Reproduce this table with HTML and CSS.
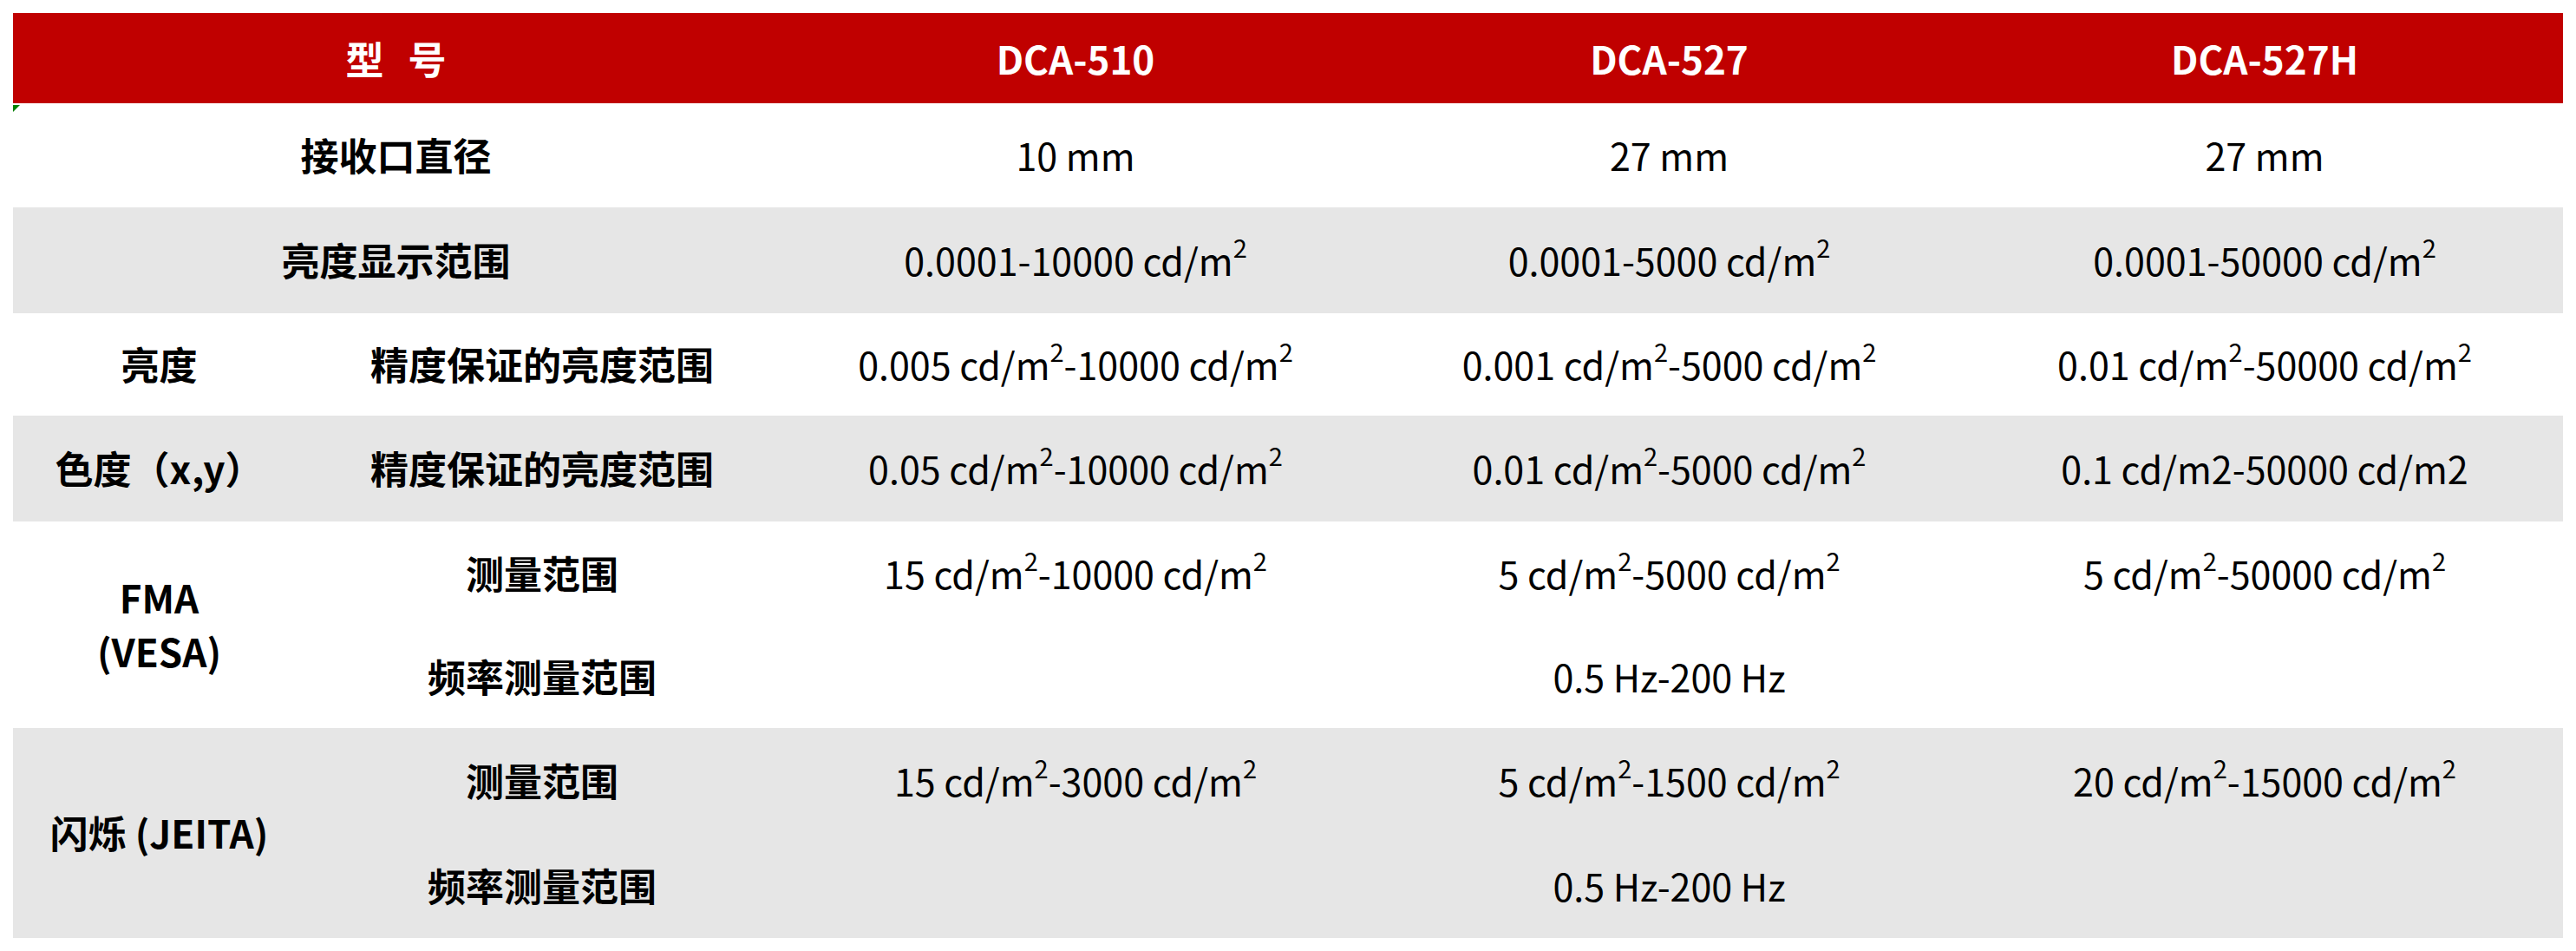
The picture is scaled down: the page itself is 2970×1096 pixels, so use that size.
FILE: index.html
```html
<!DOCTYPE html>
<html lang="zh-CN">
<head>
<meta charset="utf-8">
<title>DCA 规格</title>
<link rel="stylesheet" href="styles.css">
</head>
<body>
<div class="sheet">
  <span class="err-mark"></span>
  <table class="spec">
    <colgroup>
      <col class="c1"><col class="c2"><col class="c3"><col class="c4"><col class="c5">
    </colgroup>
    <thead>
      <tr class="r-head">
        <th colspan="2"><span class="spaced">型 号</span></th>
        <th>DCA-510</th>
        <th>DCA-527</th>
        <th>DCA-527H</th>
      </tr>
    </thead>
    <tbody>
      <tr class="r-1 white">
        <td class="lbl" colspan="2">接收口直径</td>
        <td>10 mm</td>
        <td>27 mm</td>
        <td>27 mm</td>
      </tr>
      <tr class="r-2 gray">
        <td class="lbl" colspan="2">亮度显示范围</td>
        <td>0.0001-10000 cd/m<sup class="sq">2</sup></td>
        <td>0.0001-5000 cd/m<sup class="sq">2</sup></td>
        <td>0.0001-50000 cd/m<sup class="sq">2</sup></td>
      </tr>
      <tr class="r-3 white">
        <td class="lbl">亮度</td>
        <td class="lbl">精度保证的亮度范围</td>
        <td>0.005 cd/m<sup class="sq">2</sup>-10000 cd/m<sup class="sq">2</sup></td>
        <td>0.001 cd/m<sup class="sq">2</sup>-5000 cd/m<sup class="sq">2</sup></td>
        <td>0.01 cd/m<sup class="sq">2</sup>-50000 cd/m<sup class="sq">2</sup></td>
      </tr>
      <tr class="r-4 gray">
        <td class="lbl">色度（x,y）</td>
        <td class="lbl">精度保证的亮度范围</td>
        <td>0.05 cd/m<sup class="sq">2</sup>-10000 cd/m<sup class="sq">2</sup></td>
        <td>0.01 cd/m<sup class="sq">2</sup>-5000 cd/m<sup class="sq">2</sup></td>
        <td>0.1 cd/m2-50000 cd/m2</td>
      </tr>
      <tr class="r-5a white">
        <td class="lbl" rowspan="2">FMA<br>(VESA)</td>
        <td class="lbl">测量范围</td>
        <td>15 cd/m<sup class="sq">2</sup>-10000 cd/m<sup class="sq">2</sup></td>
        <td>5 cd/m<sup class="sq">2</sup>-5000 cd/m<sup class="sq">2</sup></td>
        <td>5 cd/m<sup class="sq">2</sup>-50000 cd/m<sup class="sq">2</sup></td>
      </tr>
      <tr class="r-5b white">
        <td class="lbl">频率测量范围</td>
        <td></td>
        <td>0.5 Hz-200 Hz</td>
        <td></td>
      </tr>
      <tr class="r-6a gray">
        <td class="lbl" rowspan="2">闪烁 (JEITA)</td>
        <td class="lbl">测量范围</td>
        <td>15 cd/m<sup class="sq">2</sup>-3000 cd/m<sup class="sq">2</sup></td>
        <td>5 cd/m<sup class="sq">2</sup>-1500 cd/m<sup class="sq">2</sup></td>
        <td>20 cd/m<sup class="sq">2</sup>-15000 cd/m<sup class="sq">2</sup></td>
      </tr>
      <tr class="r-6b gray">
        <td class="lbl">频率测量范围</td>
        <td></td>
        <td>0.5 Hz-200 Hz</td>
        <td></td>
      </tr>
    </tbody>
  </table>
</div>
</body>
</html>
```

FILE: styles.css
```css
html, body {
  margin: 0;
  padding: 0;
  background: #ffffff;
}

body {
  padding: 15px;
  font-family: "Noto Sans CJK SC", "Noto Sans", sans-serif;
  color: #000000;
}

.sheet {
  position: relative;
  width: 2940px;
}

.err-mark {
  position: absolute;
  left: 0;
  top: 106px;
  width: 8px;
  height: 8px;
  background: #008000;
  clip-path: polygon(0 0, 100% 0, 0 100%);
}

.spec {
  width: 2940px;
  table-layout: fixed;
  border-collapse: collapse;
  border-spacing: 0;
  font-size: 43px;
}

.c1 { width: 337px; }
.c2 { width: 546px; }
.c3 { width: 684px; }
.c4 { width: 685px; }
.c5 { width: 688px; }

.spec th,
.spec td {
  padding: 0;
  text-align: center;
  vertical-align: middle;
  line-height: 1.43;
  white-space: nowrap;
}

.spec th {
  background: #c00000;
  color: #ffffff;
  font-weight: 700;
  font-size: 44px;
}

.spaced {
  word-spacing: 18px;
}

.r-head { height: 104px; }
.r-1 { height: 120px; }
.r-2 { height: 122px; }
.r-3 { height: 118px; }
.r-4 { height: 122px; }
.r-5a { height: 119px; }
.r-5b { height: 119px; }
.r-6a { height: 121px; }
.r-6b { height: 121px; }

.white td { background: #ffffff; }
.gray td { background: #e6e6e6; }

.spec td.lbl {
  font-weight: 700;
  font-size: 44px;
  line-height: 1.4;
}

.sq {
  font-size: 29px;
  line-height: 0;
  vertical-align: 21px;
}
```
